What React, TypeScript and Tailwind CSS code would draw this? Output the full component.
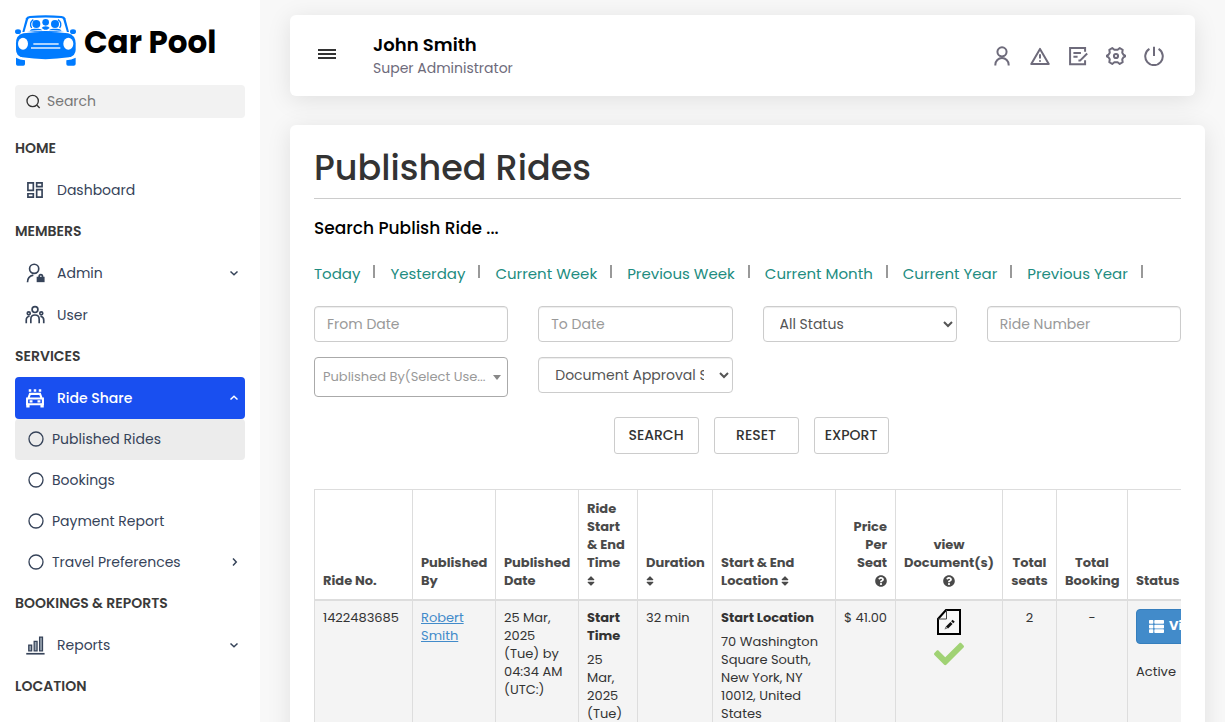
import type { ReactNode } from 'react';
import { FaCheck, FaQuestionCircle, FaSort, FaThList } from 'react-icons/fa';

type IconProps = { children: ReactNode; className?: string; width?: number };

function Icon({ children, className = 'size-5', width = 2 }: IconProps) {
  return (
    <svg
      viewBox="0 0 24 24"
      fill="none"
      stroke="currentColor"
      strokeWidth={width}
      className={`shrink-0 ${className}`}
      aria-hidden="true"
    >
      {children}
    </svg>
  );
}

function Chevron({ direction }: { direction: 'up' | 'down' | 'right' }) {
  const paths = { up: 'M5 15 12 8.5l7 6.5', down: 'M5 9 12 15.500l7-6.500', right: 'M8 5l6.500 7-6.500 7' };
  return (
    <Icon className="size-3" width={3}>
      <path d={paths[direction]} />
    </Icon>
  );
}

function CarLogo() {
  return (
    <svg viewBox="0 0 183 151" className="h-[51px] w-[61px] shrink-0 fill-[#007bff]" aria-hidden="true">
      <path d="M22 50 33 9Q35 3 44 2q48-4 96 0 9 1 11 7l11 41z" />
      <path fill="#fff" d="M28 51 39 13q1-5 7-5 46-3 92 0 6 0 7 5l11 38Q92 43 28 51z" />
      <circle cx="64" cy="26" r="12" />
      <circle cx="92" cy="21" r="10" />
      <circle cx="120" cy="26" r="12" />
      <path d="M44 46q3-6 14-6h12q9 0 12 5-20-1-38 1zM102 45q3-5 12-5h12q11 0 14 6-18-2-38-1zM80 38q2-5 12-5t12 5l-8 5h-8z" />
      <g fill="none" stroke="#007bff" strokeWidth="4">
        <path d="M50 38q-9-15 5-25M134 38q9-15-5-25" />
      </g>
      <ellipse cx="9" cy="49" rx="9" ry="7" />
      <ellipse cx="174" cy="49" rx="9" ry="7" />
      <path d="M3 84q0-25 22-30 67-9 134 0 22 5 23 30v19q0 18-20 23-71 11-140 0-19-5-19-23z" />
      <g fill="#fff">
        <ellipse cx="24" cy="85" rx="15" ry="18" />
        <ellipse cx="160" cy="85" rx="15" ry="18" />
        <rect x="55" y="84" width="76" height="4" />
        <rect x="48" y="96" width="88" height="4" />
      </g>
      <path d="M3 127q12 7 27 8v11q0 5-5 5H8q-5 0-5-5zM182 127q-12 7-28 8v11q0 5 5 5h17q6 0 6-5z" />
    </svg>
  );
}

const icons = {
  dashboard: (
    <Icon>
      <path d="M3.500 3.500h6.500v9H3.500zM14 3.500h6.500v4.500H14zM3.500 16.500H10v4H3.500zM14 11.500h6.500v9H14z" />
    </Icon>
  ),
  admin: (
    <Icon>
      <circle cx="11" cy="7" r="5.500" />
      <path d="M3 23q0-7 7-8.500M17 18v-2a2 2 0 0 1 4 0v2" />
      <path fill="currentColor" stroke="none" d="M14 16.500h9.500V23H14z" />
    </Icon>
  ),
  users: (
    <Icon>
      <circle cx="12" cy="5.500" r="3.500" />
      <circle cx="4.500" cy="10" r="1.800" />
      <circle cx="19.500" cy="10" r="1.800" />
      <path d="M7 22v-5q0-5 5-5t5 5v5M1.500 22v-4q0-4 4-4.500M22.500 22v-4q0-4-4-4.500" />
    </Icon>
  ),
  ride: (
    <Icon width={2.5}>
      <path d="M2.500 12.500h19v7h-19zM4 12.500 6 7h12l2 5.500" />
      <path d="M6 1.500v3M12 1.500v3M18 1.500v3" strokeWidth="3" />
      <path d="M3.500 19v4.500M20.500 19v4.500" strokeWidth="4" />
      <path d="M5.500 16h3.500M15 16h3.500" />
    </Icon>
  ),
  reports: (
    <Icon width={1.5}>
      <path fill="#9aa5b1" d="M4.500 12h3.500v7H4.500zM11 7.500h3.500V19H11zM17.500 2.500h3.500V19h-3.500z" />
      <path d="M1.500 22.500h22" strokeWidth="2" />
    </Icon>
  ),
};

function Heading({ children }: { children: ReactNode }) {
  return <h2 className="flex h-[41px] items-center pb-[2px] text-sm font-semibold text-[#3a3a3a]">{children}</h2>;
}

type NavItemProps = { icon: ReactNode; label: string; chevron?: 'up' | 'down'; active?: boolean };

function NavItem({ icon, label, chevron, active }: NavItemProps) {
  return (
    <a
      href="#"
      className={`flex h-[42px] items-center gap-3 rounded pr-[5px] pl-[10px] ${
        active ? 'bg-[#194ff0] font-medium text-white' : ''
      }`}
    >
      {icon}
      <span className="flex-1">{label}</span>
      {chevron && <Chevron direction={chevron} />}
    </a>
  );
}

function SubItem({ label, active, more }: { label: string; active?: boolean; more?: boolean }) {
  return (
    <a
      href="#"
      className={`flex h-[41px] items-center gap-2 rounded pr-1 pb-[2px] pl-[13px] ${active ? 'bg-[#ececec]' : ''}`}
    >
      <Icon className="size-4">
        <circle cx="12" cy="12" r="10.500" />
      </Icon>
      <span className="flex-1">{label}</span>
      {more && <Chevron direction="right" />}
    </a>
  );
}

function Sidebar() {
  return (
    <aside className="w-[260px] shrink-0 overflow-hidden bg-white px-[15px] pt-[15px] text-[#364359]">
      <a href="#" className="flex h-[51px] items-center gap-2">
        <CarLogo />
        <span className="pt-1 text-[31px] font-bold whitespace-nowrap text-black">Car Pool</span>
      </a>
      <label className="mt-[19px] mb-[10px] flex h-[33px] items-center gap-1 rounded bg-[#f2f2f2] px-[10px] pb-[2px]">
        <Icon className="size-4 text-[#333]">
          <circle cx="11.500" cy="12" r="8.500" />
          <path d="m18 18.500 4 4" />
        </Icon>
        <input
          type="search"
          aria-label="Search"
          placeholder="Search"
          className="w-full min-w-0 px-[2px] outline-none placeholder:text-[#777]"
        />
      </label>
      <nav>
        <Heading>HOME</Heading>
        <NavItem icon={icons.dashboard} label="Dashboard" />
        <Heading>MEMBERS</Heading>
        <NavItem icon={icons.admin} label="Admin" chevron="down" />
        <NavItem icon={icons.users} label="User" />
        <Heading>SERVICES</Heading>
        <NavItem icon={icons.ride} label="Ride Share" chevron="up" active />
        <SubItem label="Published Rides" active />
        <SubItem label="Bookings" />
        <SubItem label="Payment Report" />
        <SubItem label="Travel Preferences" more />
        <Heading>BOOKINGS &amp; REPORTS</Heading>
        <NavItem icon={icons.reports} label="Reports" chevron="down" />
        <Heading>LOCATION</Heading>
      </nav>
    </aside>
  );
}

const actions = [
  {
    label: 'Profile',
    icon: (
      <>
        <circle cx="12" cy="7" r="5.500" />
        <path d="M4 23.500v-1a8 8 0 0 1 16 0v1" />
      </>
    ),
  },
  {
    label: 'Alerts',
    icon: <path strokeLinejoin="round" d="M12 3.500 22.500 21.500h-21zM12 10v5M12 17v2" />,
  },
  {
    label: 'Edit',
    icon: <path d="M20.500 7V2.500H2.500v19.500h18v-5M6.500 8.500h9M6.500 13h5M23 9l-8.500 8.500h-2" />,
  },
  {
    label: 'Settings',
    icon: (
      <>
        <path
          strokeLinejoin="round"
          d="M7.500 2.500 10 4.500h4l2.500-2L20 4.500 19.500 8l1.500 2.500 2 1v1l-2 1-1.500 2.500.5 3.500-3.500 2-2.500-2h-4l-2.500 2L4 19.500l.5-3.500L3 13.500l-2-1v-1l2-1L4.500 8 4 4.500z"
        />
        <circle cx="12" cy="12" r="2.500" />
      </>
    ),
  },
  {
    label: 'Log out',
    icon: <path d="M12 1v11M6.500 3.500a10.500 10.500 0 1 0 11 0" />,
  },
];

function Topbar() {
  return (
    <header className="mr-[30px] flex h-[81px] items-center rounded-md bg-white pr-[31px] pl-7 shadow-[0_4px_24px_rgba(0,0,0,0.1)]">
      <button type="button" aria-label="Toggle menu" className="mb-1 flex w-[18px] flex-col gap-[2px]">
        <span className="h-[2px] w-full bg-[#333]" />
        <span className="h-[2px] w-full bg-[#333]" />
        <span className="h-[2px] w-full bg-[#333]" />
      </button>
      <div className="ml-[37px] flex-1">
        <p className="text-lg leading-6 font-semibold text-black">John Smith</p>
        <p className="leading-[22px] text-[#6e6b7b]">Super Administrator</p>
      </div>
      <div className="flex gap-[18px] text-[#6e6b7b]">
        {actions.map(({ label, icon }) => (
          <button key={label} type="button" aria-label={label}>
            <Icon width={2.4}>{icon}</Icon>
          </button>
        ))}
      </div>
    </header>
  );
}

const ranges = ['Today', 'Yesterday', 'Current Week', 'Previous Week', 'Current Month', 'Current Year', 'Previous Year'];

const field =
  'h-9 w-full min-w-0 rounded border border-[#ccc] bg-white px-3 text-[#555] placeholder:text-[#999] shadow-[inset_0_1px_1px_rgba(0,0,0,0.075)]';
const button = 'h-[37px] rounded-[3px] border border-[#ccc] bg-white pb-[2px] font-medium text-[#333]';

function Filters() {
  return (
    <form>
      <h3 className="mt-[17px] text-[17px] leading-6 font-medium text-black">Search Publish Ride ...</h3>
      <div className="mt-[22px] flex text-[15px] leading-6 whitespace-nowrap text-[#218c80]">
        {ranges.map((range) => (
          <div key={range} className="flex">
            <a href="#">{range}</a>
            <span className="mt-[3px] mr-[15px] ml-[13px] h-[13px] w-[2px] bg-[#999]" />
          </div>
        ))}
      </div>
      <div className="mt-5 grid grid-cols-4 gap-x-[30px] gap-y-[15px]">
        <input aria-label="From Date" placeholder="From Date" className={field} />
        <input aria-label="To Date" placeholder="To Date" className={field} />
        <select aria-label="Status" className={field}>
          <option>All Status</option>
        </select>
        <input aria-label="Ride Number" placeholder="Ride Number" className={field} />
        <div className="relative">
          <select
            aria-label="Published By"
            className="h-10 w-full appearance-none rounded border border-[#aaa] bg-white px-2 text-[13px] text-[#999]"
          >
            <option>Published By(Select Use...</option>
          </select>
          <span className="pointer-events-none absolute top-[18px] right-[7px] border-x-4 border-t-[5px] border-x-transparent border-t-[#888]" />
        </div>
        <select aria-label="Document Approval Status" className={field}>
          <option>Document Approval Status</option>
        </select>
      </div>
      <div className="mt-5 flex justify-center gap-[15px] pl-[7px]">
        <button type="submit" className={`w-[85px] ${button}`}>SEARCH</button>
        <button type="reset" className={`w-[85px] ${button}`}>RESET</button>
        <button type="button" className={`w-[75px] ${button}`}>EXPORT</button>
      </div>
    </form>
  );
}

function EditDocument() {
  return (
    <svg viewBox="0 0 24 26" className="h-[26px] w-6" aria-hidden="true">
      <path d="M9 1h14v24H1V10z" fill="#f8f8f8" stroke="#000" strokeWidth="2" />
      <path d="M9.500 1v9H1" fill="none" stroke="#444" strokeWidth="1" />
      <path d="m10 18.500 4.500-4.500" stroke="#111" strokeWidth="3" />
      <path d="m15.200 13.300 1.500-1.500" stroke="#111" strokeWidth="3" />
      <path d="m7.500 20.500 1-3 2 2z" fill="#777" />
    </svg>
  );
}

const th = 'border border-b-2 border-[#ddd] px-2 pt-2 pb-[9px] align-bottom font-bold text-[#4a4a4a]';
const td = 'border border-[#ddd] p-2 align-top';

function RidesTable() {
  return (
    <div className="mt-[35px] overflow-x-auto [scrollbar-width:none]">
      <table className="w-[963px] table-fixed border-collapse text-left text-[13px] leading-[18px] text-[#333]">
        <colgroup>
          <col className="w-[98px]" />
          <col className="w-[83px]" />
          <col className="w-[83px]" />
          <col className="w-[59px]" />
          <col className="w-[75px]" />
          <col className="w-[123px]" />
          <col className="w-[60px]" />
          <col className="w-[107px]" />
          <col className="w-[54px]" />
          <col className="w-[71px]" />
          <col />
        </colgroup>
        <thead className="h-[110px]">
          <tr>
            <th className={th}>Ride No.</th>
            <th className={th}>Published By</th>
            <th className={th}>Published Date</th>
            <th className={th}>
              Ride Start &amp;&nbsp;End Time <FaSort className="my-[3px] -ml-[2px] block size-3" />
            </th>
            <th className={th}>
              Duration <FaSort className="my-[3px] -ml-[2px] block size-3" />
            </th>
            <th className={th}>
              Start &amp; End Location <FaSort className="-ml-[2px] inline size-3" />
            </th>
            <th className={`${th} text-right`}>
              Price Per Seat <FaQuestionCircle className="my-[3px] ml-auto size-3" />
            </th>
            <th className={`${th} text-center`}>
              view Document(s) <FaQuestionCircle className="mx-auto my-[3px] size-3" />
            </th>
            <th className={`${th} text-center`}>Total seats</th>
            <th className={`${th} text-center`}>Total Booking</th>
            <th className={th}>Status</th>
          </tr>
        </thead>
        <tbody>
          <tr className="bg-[#f4f4f4]">
            <td className={td}>1422483685</td>
            <td className={td}>
              <a href="#" className="text-[#428bca] underline">Robert Smith</a>
            </td>
            <td className={td}>25 Mar, 2025 (Tue)&nbsp;by 04:34&nbsp;AM (UTC:)</td>
            <td className={td}>
              <p className="mb-[6px] font-bold">Start Time</p>
              <p>25 Mar, 2025 (Tue)</p>
            </td>
            <td className={td}>32 min</td>
            <td className={td}>
              <p className="mb-[6px] font-bold">Start Location</p>
              <p>70 Washington Square South, New York, NY 10012, United States</p>
            </td>
            <td className={`${td} text-right whitespace-nowrap`}>$ 41.00</td>
            <td className={td}>
              <div className="flex flex-col items-center gap-1">
                <button type="button" aria-label="View documents"><EditDocument /></button>
                <FaCheck className="size-[30px] text-[#a0d274]" />
              </div>
            </td>
            <td className={`${td} text-center`}>2</td>
            <td className={`${td} text-center`}>-</td>
            <td className={td}>
              <button
                type="button"
                className="flex h-[35px] items-center gap-[5px] rounded border border-[#357ebd] bg-[#428bca] px-3 font-bold whitespace-nowrap text-white"
              >
                <FaThList className="size-[15px]" /> View Details
              </button>
              <p className="mt-[19px]">Active</p>
            </td>
          </tr>
        </tbody>
      </table>
    </div>
  );
}

export default function App() {
  return (
    <div className="flex h-screen bg-[#f8f8f8] font-['Poppins','Inter',sans-serif] text-sm">
      <div className="z-10 flex">
        <Sidebar />
      </div>
      <main className="min-w-0 flex-1 overflow-x-hidden overflow-y-auto pt-[15px] pl-[30px] [scrollbar-width:none]">
        <Topbar />
        <section className="mt-[29px] mr-5 min-h-screen rounded-md bg-white px-6 pt-[18px] pb-6 shadow-[0_4px_24px_rgba(0,0,0,0.1)]">
          <h1 className="border-b border-[#ccc] pt-[1px] pb-[6px] text-[35px] leading-12 font-medium text-[#333]">
            Published Rides
          </h1>
          <Filters />
          <RidesTable />
        </section>
      </main>
    </div>
  );
}
